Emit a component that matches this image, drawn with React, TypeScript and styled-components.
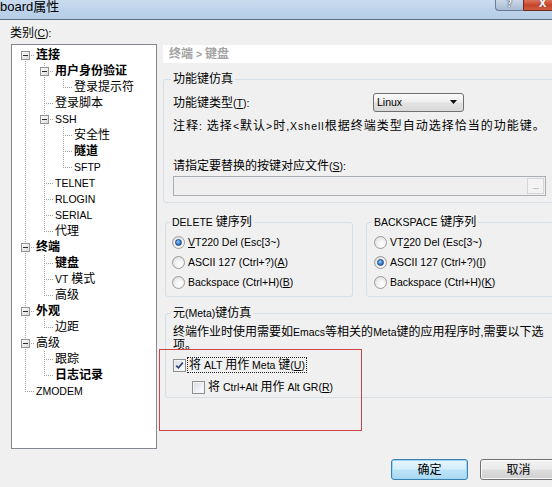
import React from 'react';
import styled, { createGlobalStyle, css } from 'styled-components';

const GlobalStyle = createGlobalStyle`
  html, body { margin: 0; padding: 0; background: #f0f0f0; overflow: hidden; }
  body {
    font-family: "Liberation Sans", "Noto Sans CJK SC", sans-serif;
    font-size: 12px;
    color: #000;
  }
  #root { width: 552px; height: 487px; overflow: hidden; }
`;

/* ---------- text helpers ---------- */
const Lat = styled.span`
  font-size: 10.5px;
  line-height: 1;
`;
const Mn = styled.span`
  text-decoration: underline;
  text-underline-offset: 1px;
`;

function renderText(s: string): React.ReactNode[] {
  return s
    .split(/([\x20-\x7e]+)/)
    .filter((p) => p !== '')
    .map((p, i) => {
      if (/^[\x20-\x7e]+$/.test(p)) {
        const segs = p.split('&');
        const out: React.ReactNode[] = [segs[0]];
        for (let j = 1; j < segs.length; j++) {
          out.push(<Mn key={j}>{segs[j][0]}</Mn>, segs[j].slice(1));
        }
        return <Lat key={i}>{out}</Lat>;
      }
      return <React.Fragment key={i}>{p}</React.Fragment>;
    });
}
const Txt = ({ t }: { t: string }) => <>{renderText(t)}</>;

/* ---------- window frame ---------- */
const Window = styled.div`
  position: relative;
  width: 562px;
  height: 487px;
  display: flex;
  flex-direction: column;
  background: #f0f0f0;
`;

const TitleBar = styled.div`
  height: 19px;
  flex: none;
  border-bottom: 1px solid #5b6d82;
  background: linear-gradient(180deg, #c9dbee 0%, #bcd2ea 60%, #b7cee8 100%);
  display: flex;
  align-items: flex-start;
  justify-content: space-between;
  overflow: hidden;
`;

const TitleText = styled.div`
  font-size: 13px;
  line-height: 13px;
  white-space: nowrap;
`;

const CaptionButtons = styled.div`
  display: flex;
  margin-top: -7px;
`;

const CaptionButton = styled.div<{ $close?: boolean }>`
  height: 18px;
  box-sizing: border-box;
  display: flex;
  align-items: flex-end;
  justify-content: center;
  padding-bottom: 1px;
  font-family: "DejaVu Sans", sans-serif;
  font-weight: bold;
  font-size: 10px;
  line-height: 10px;
  color: #f4f6fa;
  ${(p) =>
    p.$close
      ? css`
          width: 39px;
          border: 1px solid #6e2a20;
          border-radius: 0 0 4px 0;
          background: linear-gradient(180deg, #eaa898 0%, #d76a52 45%, #c4442a 70%, #d0603f 100%);
          text-shadow: 0 0 1px #5a1a10;
        `
      : css`
          width: 28px;
          border: 1px solid #6a7b94;
          border-right: none;
          border-radius: 0 0 0 4px;
          background: linear-gradient(180deg, #dce6f1 0%, #c3d2e4 50%, #a9bcd4 100%);
          color: #e9eef6;
          text-shadow: 0 0 1px #23324b, 0 0 1px #23324b;
        `}
`;

/* ---------- body ---------- */
const Body = styled.div`
  display: grid;
  grid-template-columns: 146px 1fr;
  grid-template-rows: 18px 405px;
  column-gap: 6px;
  padding: 6px 8px 0 11px;
`;

const CategoryLabel = styled.div`
  grid-column: 1;
  grid-row: 1;
  align-self: start;
  line-height: 14px;
  height: 14px;
  margin-left: -1px;
`;

const TreeBox = styled.div`
  grid-column: 1;
  grid-row: 2;
  box-sizing: border-box;
  border: 1px solid #828790;
  background: #fff;
  padding-top: 2px;
  overflow: hidden;
`;

const TreeRow = styled.div`
  display: flex;
  height: 16px;
`;

const NodeLabel = styled.span<{ $bold?: boolean }>`
  line-height: 16px;
  white-space: nowrap;
  font-weight: ${(p) => (p.$bold ? 700 : 400)};
`;

/* ---------- right panel ---------- */
const RightPanel = styled.div`
  grid-column: 2;
  grid-row: 2;
  display: flex;
  flex-direction: column;
  min-width: 0;
`;

const PanelHeader = styled.div`
  margin-top: 1px;
  height: 18px;
  line-height: 18px;
  background: #fff;
  color: #a4a4a4;
  font-weight: bold;
  padding-left: 6px;
  flex: none;
`;

const Group = styled.fieldset<{ $top: number; $left?: number; $pad: string; $width?: number; $grow?: boolean }>`
  margin: ${(p) => p.$top}px 0 0 ${(p) => p.$left ?? 0}px;
  padding: ${(p) => p.$pad};
  border: 1px solid #d5dfe5;
  border-radius: 3px;
  min-width: 0;
  box-sizing: border-box;
  flex: ${(p) => (p.$grow ? '1 1 0' : 'none')};
  ${(p) => p.$width && css`width: ${p.$width}px;`}
`;

const Legend = styled.legend`
  padding: 0 2px;
  margin-left: -2px;
  line-height: 14px;
  height: 14px;
  white-space: nowrap;
`;

const FieldRow = styled.div`
  display: grid;
  grid-template-columns: 200px 91px;
  align-items: center;
  height: 19px;
`;

const FieldLabel = styled.span`
  line-height: 14px;
`;

const Select = styled.div`
  height: 19px;
  box-sizing: border-box;
  border: 1px solid #707070;
  border-radius: 3px;
  background: linear-gradient(180deg, #fbfbfb 0%, #eeeeee 48%, #e2e2e2 52%, #d9d9d9 100%);
  display: flex;
  align-items: center;
  justify-content: space-between;
  padding: 0 5px 0 3px;
  line-height: 14px;
`;

const Line = styled.div<{ $top: number; $lh?: number; $width?: number; $ls?: number }>`
  margin-top: ${(p) => p.$top}px;
  line-height: ${(p) => p.$lh ?? 14}px;
  letter-spacing: ${(p) => p.$ls ?? 0}px;
  white-space: ${(p) => (p.$width ? 'normal' : 'nowrap')};
  ${(p) => p.$width && css`width: ${p.$width}px;`}
`;

const FileBox = styled.div`
  margin-top: 3px;
  height: 20px;
  box-sizing: border-box;
  border: 1px solid #a9adb4;
  background: #efefef;
  display: flex;
  justify-content: flex-end;
  padding: 1px;
`;

const BrowseButton = styled.div`
  width: 17px;
  box-sizing: border-box;
  border: 1px solid #d6d6d6;
  background: #f3f3f3;
  color: #8c8c8c;
  font-size: 9px;
  line-height: 9px;
  display: flex;
  align-items: flex-end;
  justify-content: center;
  padding-bottom: 2px;
  letter-spacing: -0.5px;
`;

const KeyRow = styled.div`
  display: flex;
  gap: 13px;
  margin: 12px 0 0 2px;
  flex: none;
`;

const OptionRow = styled.div<{ $h: number; $top?: number; $indent?: number }>`
  display: flex;
  align-items: center;
  height: ${(p) => p.$h}px;
  margin-top: ${(p) => p.$top ?? 0}px;
  margin-left: ${(p) => p.$indent ?? 0}px;
  gap: 3px;
  white-space: nowrap;
  line-height: 14px;
`;

const Radio = styled.span<{ $on?: boolean }>`
  width: 13px;
  height: 13px;
  flex: none;
  box-sizing: border-box;
  border-radius: 50%;
  border: 1px solid #9c9c9c;
  background: radial-gradient(circle at 62% 66%, #ffffff 0%, #f4f4f4 40%, #d2d2d2 100%);
  display: flex;
  align-items: center;
  justify-content: center;
  ${(p) =>
    p.$on &&
    css`
      &::after {
        content: '';
        width: 5px;
        height: 5px;
        border-radius: 50%;
        border: 1px solid #1c4679;
        background: radial-gradient(circle at 40% 35%, #9dd0fb 0%, #3a86d6 50%, #164f96 100%);
      }
    `}
`;

const CheckBox = styled.span`
  width: 13px;
  height: 13px;
  flex: none;
  box-sizing: border-box;
  border: 1px solid #8e8f8f;
  background: linear-gradient(135deg, #d6d9e0 0%, #eef0f4 55%, #ffffff 100%);
  box-shadow: inset 0 0 0 1px #f4f4f4;
  display: flex;
  align-items: center;
  justify-content: center;
`;

const CheckLabel = styled.span<{ $focus?: boolean }>`
  line-height: 14px;
  padding: 0 1px;
  margin-left: -1px;
  ${(p) => p.$focus && css`outline: 1px dotted #222; outline-offset: 0;`}
`;

/* ---------- footer ---------- */
const Footer = styled.div`
  display: flex;
  justify-content: flex-end;
  gap: 12px;
  margin-top: 10px;
  padding-right: 5px;
`;

const DialogButton = styled.div<{ $primary?: boolean }>`
  width: 77px;
  height: 21px;
  box-sizing: border-box;
  border-radius: 3px;
  display: flex;
  align-items: center;
  justify-content: center;
  line-height: 14px;
  ${(p) =>
    p.$primary
      ? css`
          border: 1px solid #3c7fb1;
          background: linear-gradient(180deg, #e6f5fd 0%, #d4eefc 48%, #bde4f8 52%, #a9d9f2 100%);
          box-shadow: inset 0 0 0 1px #9ed6f3;
        `
      : css`
          border: 1px solid #707070;
          background: linear-gradient(180deg, #f2f2f2 0%, #ebebeb 48%, #dddddd 52%, #cfcfcf 100%);
          box-shadow: inset 0 0 0 1px #fbfbfb;
        `}
`;

const Annotation = styled.div`
  position: absolute;
  left: 159px;
  top: 349px;
  width: 203px;
  height: 82px;
  box-sizing: border-box;
  border: 1px solid #cf4545;
  pointer-events: none;
`;

/* ---------- tree ---------- */
type TNode = { label: string; bold?: boolean; children?: TNode[] };
type Flat = { node: TNode; depth: number; first: boolean; last: boolean; lines: boolean[] };

const treeData: TNode[] = [
  {
    label: '连接',
    bold: true,
    children: [
      { label: '用户身份验证', bold: true, children: [{ label: '登录提示符' }] },
      { label: '登录脚本' },
      { label: 'SSH', children: [{ label: '安全性' }, { label: '隧道', bold: true }, { label: 'SFTP' }] },
      { label: 'TELNET' },
      { label: 'RLOGIN' },
      { label: 'SERIAL' },
      { label: '代理' },
    ],
  },
  { label: '终端', bold: true, children: [{ label: '键盘', bold: true }, { label: 'VT 模式' }, { label: '高级' }] },
  { label: '外观', bold: true, children: [{ label: '边距' }] },
  { label: '高级', children: [{ label: '跟踪' }, { label: '日志记录', bold: true }] },
  { label: 'ZMODEM' },
];

function flatten(nodes: TNode[], depth: number, lines: boolean[], out: Flat[]): Flat[] {
  nodes.forEach((n, i) => {
    const last = i === nodes.length - 1;
    out.push({ node: n, depth, first: depth === 0 && i === 0, last, lines });
    if (n.children) flatten(n.children, depth + 1, [...lines, !last], out);
  });
  return out;
}

const IND = 19;
const DOT = '#a0a0a0';

function Connector({ f }: { f: Flat }) {
  const w = f.depth * IND + 24;
  const base = f.depth * IND;
  const cx = base + 13.5;
  return (
    <svg width={w} height={16} style={{ flex: 'none', display: 'block' }}>
      {f.lines.map((on, k) =>
        on ? (
          <line key={k} x1={k * IND + 13.5} y1={0} x2={k * IND + 13.5} y2={16} stroke={DOT} strokeDasharray="1 1" />
        ) : null
      )}
      <line x1={cx} y1={f.first ? 8 : 0} x2={cx} y2={f.last ? 9 : 16} stroke={DOT} strokeDasharray="1 1" />
      <line x1={base + 13} y1={8.5} x2={base + 23} y2={8.5} stroke={DOT} strokeDasharray="1 1" />
      {f.node.children && (
        <g>
          <defs>
            <linearGradient id="exp" x1="0" y1="0" x2="1" y2="1">
              <stop offset="0" stopColor="#ffffff" />
              <stop offset="1" stopColor="#d8d8d8" />
            </linearGradient>
          </defs>
          <rect x={base + 9.5} y={4.5} width={8} height={8} fill="url(#exp)" stroke="#919191" />
          <line x1={base + 11} y1={8.5} x2={base + 16} y2={8.5} stroke="#2b2b2b" />
        </g>
      )}
    </svg>
  );
}

function Tree() {
  const rows = flatten(treeData, 0, [], []);
  return (
    <TreeBox>
      {rows.map((f, i) => (
        <TreeRow key={i}>
          <Connector f={f} />
          <NodeLabel $bold={f.node.bold}>
            <Txt t={f.node.label} />
          </NodeLabel>
        </TreeRow>
      ))}
    </TreeBox>
  );
}

const DropArrow = () => (
  <svg width="8" height="5" viewBox="0 0 8 5" style={{ display: 'block' }}>
    <path d="M0 0 H7 L3.5 4 Z" fill="#111" />
  </svg>
);

const CheckMark = () => (
  <svg width="9" height="9" viewBox="0 0 9 9" style={{ display: 'block' }}>
    <path d="M1.2 4.6 L3.4 6.8 L7.8 1.6" fill="none" stroke="#31447a" strokeWidth="1.7" />
  </svg>
);

export default function App() {
  return (
    <>
      <GlobalStyle />
      <Window>
        <TitleBar>
          <TitleText>board属性</TitleText>
          <CaptionButtons>
            <CaptionButton>?</CaptionButton>
            <CaptionButton $close>X</CaptionButton>
          </CaptionButtons>
        </TitleBar>

        <Body>
          <CategoryLabel>
            <Txt t="类别(&C):" />
          </CategoryLabel>
          <Tree />

          <RightPanel>
            <PanelHeader>
              <Txt t="终端 > 键盘" />
            </PanelHeader>

            <Group $top={9} $pad="7px 7px 6px 9px">
              <Legend>功能键仿真</Legend>
              <FieldRow>
                <FieldLabel>
                  <Txt t="功能键类型(&T):" />
                </FieldLabel>
                <Select>
                  <Txt t="Linux" />
                  <DropArrow />
                </Select>
              </FieldRow>
              <Line $top={7} $ls={1}>
                <Txt t="注释: 选择<默认>时,Xshell根据终端类型自动选择恰当的功能键。" />
              </Line>
              <Line $top={26}>
                <Txt t="请指定要替换的按键对应文件(&S):" />
              </Line>
              <FileBox>
                <BrowseButton>...</BrowseButton>
              </FileBox>
            </Group>

            <KeyRow>
              <Group $top={0} $width={188} $pad="3px 6px 4px 6px">
                <Legend>
                  <Txt t="DELETE 键序列" />
                </Legend>
                <OptionRow $h={20}>
                  <Radio $on />
                  <span><Txt t="&VT220 Del (Esc[3~)" /></span>
                </OptionRow>
                <OptionRow $h={20}>
                  <Radio />
                  <span><Txt t="ASCII 127 (Ctrl+?)(&A)" /></span>
                </OptionRow>
                <OptionRow $h={20}>
                  <Radio />
                  <span><Txt t="Backspace (Ctrl+H)(&B)" /></span>
                </OptionRow>
              </Group>
              <Group $top={0} $grow $pad="3px 6px 4px 7px">
                <Legend>
                  <Txt t="BACKSPACE 键序列" />
                </Legend>
                <OptionRow $h={20}>
                  <Radio />
                  <span><Txt t="VT&220 Del (Esc[3~)" /></span>
                </OptionRow>
                <OptionRow $h={20}>
                  <Radio $on />
                  <span><Txt t="ASCII 127 (Ctrl+?)(&I)" /></span>
                </OptionRow>
                <OptionRow $h={20}>
                  <Radio />
                  <span><Txt t="Backspace (Ctrl+H)(&K)" /></span>
                </OptionRow>
              </Group>
            </KeyRow>

            <Group $top={9} $left={2} $pad="6px 2px 2px 7px">
              <Legend>
                <Txt t="元(Meta)键仿真" />
              </Legend>
              <Line $top={0} $lh={13} $width={376}>
                <Txt t="终端作业时使用需要如Emacs等相关的Meta键的应用程序时,需要以下选项。" />
              </Line>
              <OptionRow $h={16} $top={5}>
                <CheckBox>
                  <CheckMark />
                </CheckBox>
                <CheckLabel $focus>
                  <Txt t="将 ALT 用作 Meta 键(&U)" />
                </CheckLabel>
              </OptionRow>
              <OptionRow $h={16} $top={6} $indent={19}>
                <CheckBox />
                <CheckLabel>
                  <Txt t="将 Ctrl+Alt 用作 Alt GR(&R)" />
                </CheckLabel>
              </OptionRow>
            </Group>
          </RightPanel>
        </Body>

        <Footer>
          <DialogButton $primary>确定</DialogButton>
          <DialogButton>取消</DialogButton>
        </Footer>

        <Annotation />
      </Window>
    </>
  );
}
